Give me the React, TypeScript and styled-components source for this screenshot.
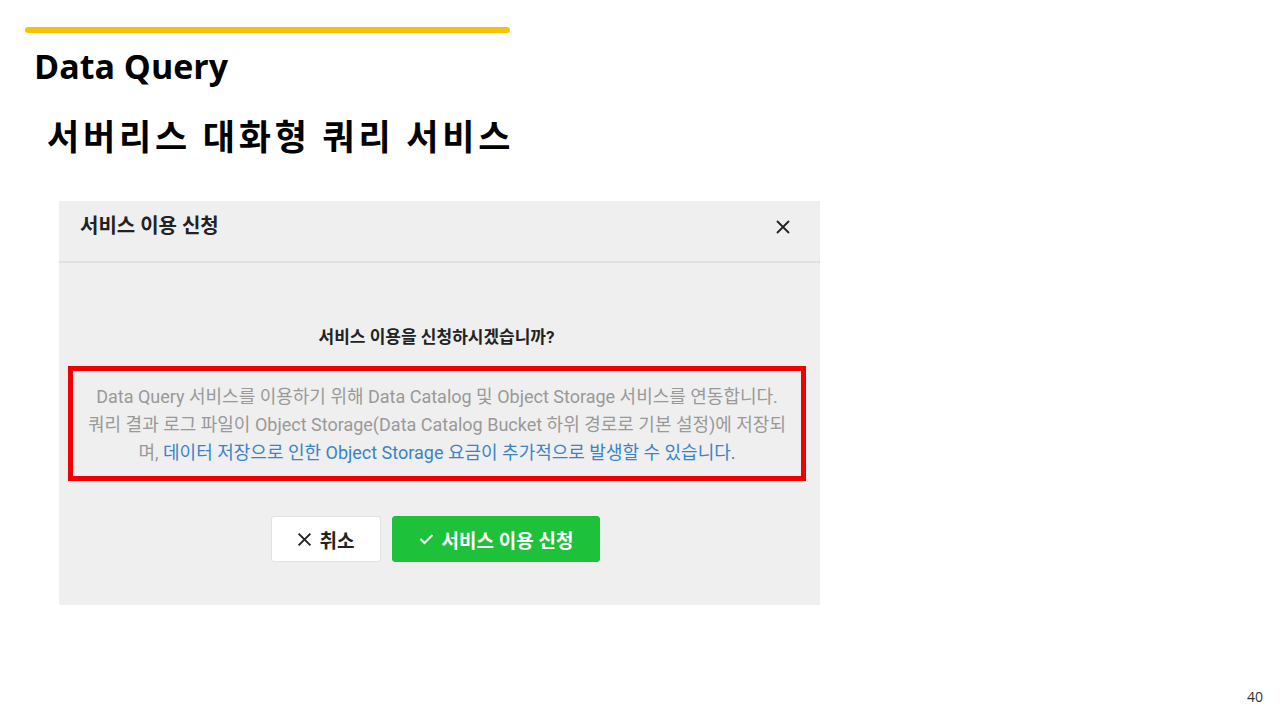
import React from 'react'
import styled, { createGlobalStyle } from 'styled-components'

const GlobalStyle = createGlobalStyle`
  html, body {
    margin: 0;
    padding: 0;
    background: #ffffff;
  }
  body {
    font-family: 'Open Sans', 'Noto Sans CJK KR', sans-serif;
    color: #000;
  }
`

const Slide = styled.div`
  width: 1280px;
  height: 720px;
  box-sizing: border-box;
  padding: 27px 17px 0 25px;
  display: flex;
  flex-direction: column;
  overflow: hidden;
`

const AccentBar = styled.div`
  width: 485px;
  height: 6px;
  border-radius: 3px;
  background: #f7c300;
`

const Title = styled.h1`
  margin: 13px 0 0 9px;
  font-family: 'Open Sans', 'Noto Sans CJK KR', sans-serif;
  font-size: 34px;
  line-height: 40px;
  font-weight: 700;
`

const Subtitle = styled.h2`
  margin: 26px 0 0 22px;
  font-family: 'Noto Sans CJK KR', sans-serif;
  font-size: 35px;
  line-height: 46px;
  font-weight: 700;
  letter-spacing: 3.8px;
`

const Dialog = styled.section`
  margin: 43px 0 0 34px;
  width: 761px;
  height: 404px;
  background: #efefef;
  display: flex;
  flex-direction: column;
  font-family: Roboto, 'Noto Sans CJK KR', sans-serif;
`

const DialogHeader = styled.header`
  height: 62px;
  border-bottom: 2px solid #e0e0e0;
  display: flex;
  align-items: flex-start;
  justify-content: space-between;
  padding: 11px 28px 0 21px;
  box-sizing: border-box;
`

const DialogTitle = styled.div`
  font-size: 20px;
  line-height: 28px;
  font-weight: 700;
  color: #222;
`

const CloseButton = styled.button`
  border: none;
  background: transparent;
  padding: 0;
  margin-top: 6px;
  width: 18px;
  height: 18px;
  display: flex;
  align-items: center;
  justify-content: center;
`

const DialogBody = styled.div`
  display: flex;
  flex-direction: column;
  align-items: center;
  padding-top: 61px;
`

const Question = styled.div`
  margin-right: 6px;
  font-size: 17px;
  line-height: 26px;
  font-weight: 700;
  color: #222;
`

const Notice = styled.div`
  align-self: stretch;
  margin: 16px 14px 0 9px;
  border: 5px solid #f00000;
  padding: 12px 0 9px;
  text-align: center;
  font-size: 18px;
  line-height: 28px;
  color: #999999;
`

const Highlight = styled.span`
  color: #3a84c6;
`

const Actions = styled.div`
  display: flex;
  gap: 11px;
  margin-top: 35px;
  margin-right: 8px;
`

const Button = styled.button<{ primary?: boolean }>`
  height: 46px;
  padding: 0 ${({ primary }) => (primary ? '26px' : '25px')};
  border-radius: 3px;
  border: 1px solid ${({ primary }) => (primary ? '#1ec13a' : '#e2e2e2')};
  background: ${({ primary }) => (primary ? '#1ec13a' : '#ffffff')};
  color: ${({ primary }) => (primary ? '#ffffff' : '#222')};
  font-family: Roboto, 'Noto Sans CJK KR', sans-serif;
  font-size: 19px;
  font-weight: 700;
  display: flex;
  align-items: center;
  gap: 8px;
`

const PageNumber = styled.div`
  margin-top: auto;
  margin-bottom: 14px;
  align-self: flex-end;
  font-size: 14px;
  color: #333;
`

export default function App() {
  return (
    <>
      <GlobalStyle />
      <Slide>
        <AccentBar />
        <Title>Data Query</Title>
        <Subtitle>서버리스 대화형 쿼리 서비스</Subtitle>
        <Dialog>
          <DialogHeader>
            <DialogTitle>서비스 이용 신청</DialogTitle>
            <CloseButton>
              <svg width="16" height="16" viewBox="0 0 16 16">
                <path d="M2 2 L14 14 M14 2 L2 14" stroke="#222" strokeWidth="1.8" />
              </svg>
            </CloseButton>
          </DialogHeader>
          <DialogBody>
            <Question>서비스 이용을 신청하시겠습니까?</Question>
            <Notice>
              Data Query 서비스를 이용하기 위해 Data Catalog 및 Object Storage 서비스를 연동합니다.
              <br />
              쿼리 결과 로그 파일이 Object Storage(Data Catalog Bucket 하위 경로로 기본 설정)에 저장되
              <br />
              며, <Highlight>데이터 저장으로 인한 Object Storage 요금이 추가적으로 발생할 수 있습니다.</Highlight>
            </Notice>
            <Actions>
              <Button>
                <svg width="15" height="15" viewBox="0 0 14 14">
                  <path d="M1.5 1.5 L12.5 12.5 M12.5 1.5 L1.5 12.5" stroke="#222" strokeWidth="1.8" />
                </svg>
                취소
              </Button>
              <Button primary>
                <svg width="15" height="12" viewBox="0 0 15 12">
                  <path d="M1.5 6 L5.5 10 L13.5 2" fill="none" stroke="#fff" strokeWidth="2" />
                </svg>
                서비스 이용 신청
              </Button>
            </Actions>
          </DialogBody>
        </Dialog>
        <PageNumber>40</PageNumber>
      </Slide>
    </>
  )
}
